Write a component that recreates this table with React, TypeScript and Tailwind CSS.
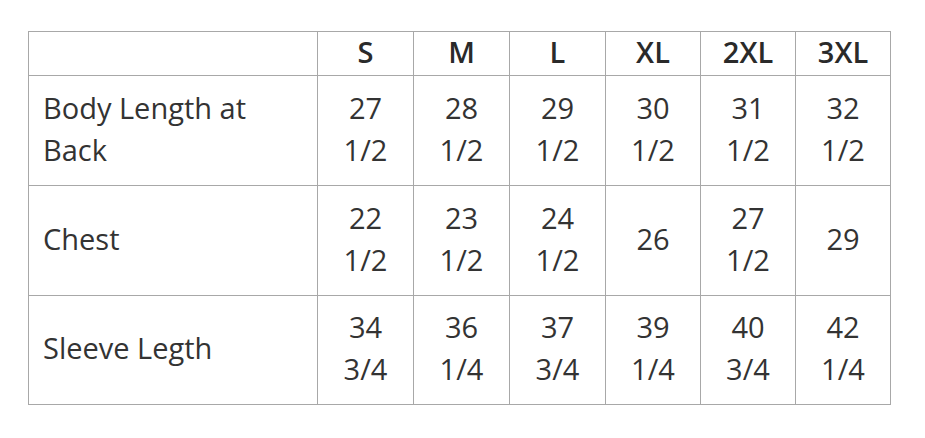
import React from "react";

const SIZES = ["S", "M", "L", "XL", "2XL", "3XL"];

const ROWS = [
  { label: ["Body Length at", "Back"], values: [["27", "1/2"], ["28", "1/2"], ["29", "1/2"], ["30", "1/2"], ["31", "1/2"], ["32", "1/2"]] },
  { label: ["Chest"], values: [["22", "1/2"], ["23", "1/2"], ["24", "1/2"], ["26"], ["27", "1/2"], ["29"]] },
  { label: ["Sleeve Legth"], values: [["34", "3/4"], ["36", "1/4"], ["37", "3/4"], ["39", "1/4"], ["40", "3/4"], ["42", "1/4"]] },
];

export default function App() {
  return (
    <div className="w-[925px] h-[438px] bg-white pt-[31px] pl-[28px] text-[#333]" style={{ fontFamily: '"Open Sans", sans-serif' }}>
      <table className="table-fixed border-collapse w-[862px] text-[29px] leading-[42px]">
        <colgroup>
          <col className="w-[289px]" />
          <col className="w-[96px]" />
          <col className="w-[96px]" />
          <col className="w-[96px]" />
          <col className="w-[95px]" />
          <col className="w-[95px]" />
          <col className="w-[95px]" />
        </colgroup>
        <thead>
          <tr className="h-[44px]">
            <th className="border border-[#a8a8a8] p-0"></th>
            {SIZES.map((s) => (
              <th key={s} className="border border-[#a8a8a8] p-0 font-semibold text-[#2a2a2a] text-center">
                <div className="-mt-[4px]">{s}</div>
              </th>
            ))}
          </tr>
        </thead>
        <tbody>
          {ROWS.map((row, i) => (
            <tr key={i} className={i === 2 ? "h-[109px]" : "h-[110px]"}>
              <td className="border border-[#a8a8a8] px-[14px] py-0 align-middle text-left">
                <div className="-mt-[4px]">
                  {row.label.map((l, j) => (
                    <div key={j}>{l}</div>
                  ))}
                </div>
              </td>
              {row.values.map((v, j) => (
                <td key={j} className="border border-[#a8a8a8] p-0 align-middle text-center">
                  <div className="-mt-[4px]">
                    {v.map((t, k) => (
                      <div key={k}>{t}</div>
                    ))}
                  </div>
                </td>
              ))}
            </tr>
          ))}
        </tbody>
      </table>
    </div>
  );
}
